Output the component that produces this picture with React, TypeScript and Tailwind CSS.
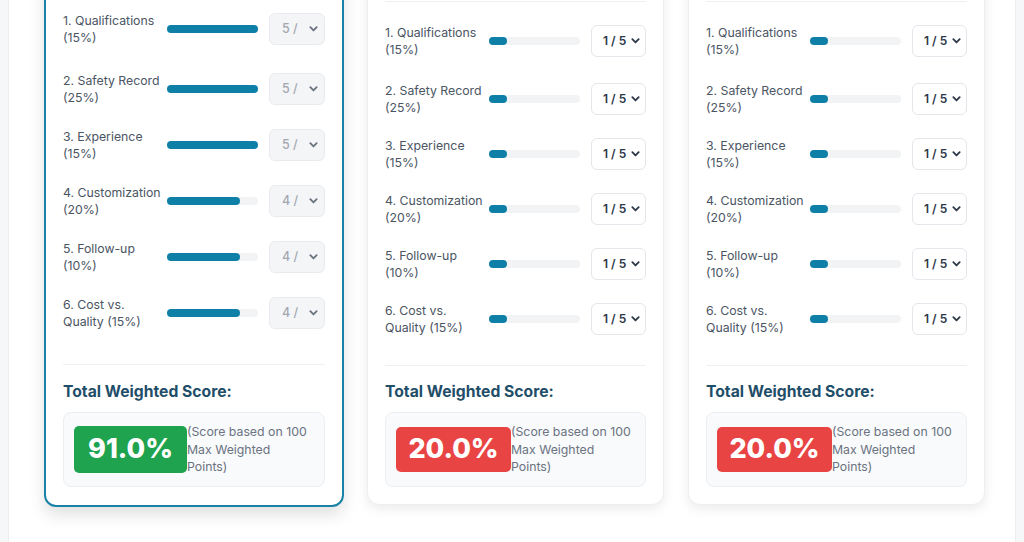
import React from "react";

const criteria = [
  "1. Qualifications (15%)",
  "2. Safety Record (25%)",
  "3. Experience (15%)",
  "4. Customization (20%)",
  "5. Follow-up (10%)",
  "6. Cost vs. Quality (15%)",
];

function Chevron({ color }: { color: string }) {
  return (
    <svg width="9" height="6" viewBox="0 0 10 6" fill="none" className="shrink-0">
      <polyline points="1.5,1 5,4.6 8.5,1" stroke={color} strokeWidth="2" strokeLinecap="round" strokeLinejoin="round" />
    </svg>
  );
}

function Row({ label, value, locked }: { label: string; value: number; locked: boolean }) {
  return (
    <div className="flex items-center">
      <div className="w-[102px] text-[12.3px] leading-[17px] text-[#4b5563]">{label}</div>
      <div className="ml-[2px] h-[8px] flex-1 rounded-full bg-[#f1f3f5]">
        <div className="h-full rounded-full bg-[#0e80a8]" style={{ width: `${(value / 5) * 100}%` }} />
      </div>
      {locked ? (
        <div className="ml-[11px] flex h-[32px] w-[56px] items-center justify-between rounded-md border border-[#e9ebee] bg-[#f4f5f7] pl-[12px] pr-[6px]">
          <span className="w-[19px] overflow-hidden whitespace-nowrap text-[12.5px] font-medium text-[#a3a8b0]">{value} / 5</span>
          <Chevron color="#6b7280" />
        </div>
      ) : (
        <div className="ml-[11px] flex h-[32px] w-[55px] items-center justify-between rounded-md border border-[#e3e6ea] bg-white pl-[11px] pr-[5px]">
          <span className="whitespace-nowrap text-[12px] font-semibold text-[#2d3748]">{value} / 5</span>
          <Chevron color="#2d3748" />
        </div>
      )}
    </div>
  );
}

function Card({ name, value, selected }: { name: string; value: number[]; selected?: boolean }) {
  const total = value.reduce((s, v, i) => s + (v / 5) * [15, 25, 15, 20, 10, 15][i], 0);
  const good = total >= 70;
  return (
    <div
      className={
        selected
          ? "w-[300px] shrink-0 rounded-xl border-2 border-[#1a82a6] bg-white px-[17px] pt-[17px] pb-[18px] shadow-[0_8px_16px_rgba(0,0,0,0.12)]"
          : "mt-[12px] w-[297px] shrink-0 rounded-xl border border-[#eceef1] bg-white px-[17px] pt-[17px] pb-[17px] shadow-[0_4px_12px_rgba(0,0,0,0.08)]"
      }
    >
      <div className="h-[64px] border-b border-[#eef0f2]">
        <div className="text-[17px] font-bold text-[#1f4e69]">{name}</div>
      </div>

      <div className={selected ? "mt-[21px] flex flex-col gap-[22px]" : "mt-[22px] flex flex-col gap-[21px]"}>
        {criteria.map((c, i) => (
          <div key={c} className={i === 0 ? (selected ? "mb-[4px]" : "mb-[3px]") : ""}>
            <Row label={c} value={value[i]} locked={!!selected} />
          </div>
        ))}
      </div>

      <div className={selected ? "mt-[34px] border-t border-[#eef0f2] pt-[15px]" : "mt-[29px] border-t border-[#eef0f2] pt-[14px]"}>
        <div className="text-[15.7px] font-bold leading-[24px] text-[#1f4e69]">Total Weighted Score:</div>
        <div className="mt-[8px] flex items-center rounded-lg border border-[#eceff2] bg-[#f8fafc] p-[10px]">
          <div
            className={
              (good ? "bg-[#1fa34e]" : "bg-[#e94444]") +
              (selected ? " h-[47px] w-[113px]" : " h-[45px] w-[115px]") +
              " flex shrink-0 items-center justify-center rounded-[5px] text-[27px] font-extrabold text-white"
            }
          >
            {total.toFixed(1)}%
          </div>
          <div className="w-[122px] shrink-0 text-[12.3px] leading-[17.5px] text-[#6b7280]">(Score based on 100 Max Weighted Points)</div>
        </div>
      </div>
    </div>
  );
}

export default function App() {
  return (
    <div className="h-[542px] w-[1024px] overflow-hidden bg-[#f6f7f8] font-['Inter',sans-serif]">
      <div className="mx-[8px] flow-root h-full border-x border-[#eeeeee] bg-white">
        <div className="-mt-[92px] flex items-start pl-[35px]">
          <Card name="Contractor A" value={[5, 5, 5, 4, 4, 4]} selected />
          <div className="ml-[23px]">
            <Card name="Contractor B" value={[1, 1, 1, 1, 1, 1]} />
          </div>
          <div className="ml-[24px]">
            <Card name="Contractor C" value={[1, 1, 1, 1, 1, 1]} />
          </div>
        </div>
      </div>
    </div>
  );
}
